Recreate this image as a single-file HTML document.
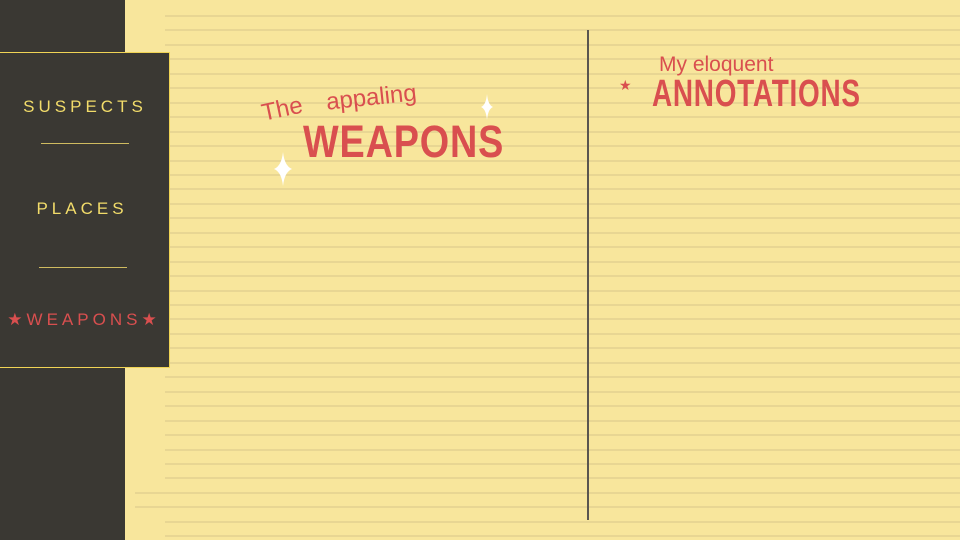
<!DOCTYPE html>
<html><head><style>
body{margin:0;width:960px;height:540px;overflow:hidden;background:#f8e69c;position:relative;font-family:"Liberation Sans",sans-serif}
.dark{position:absolute;left:0;top:0;width:125px;height:540px;background:#3a3833}
.line{position:absolute;left:165px;right:0;height:2px;background:#e8d693}
.panel{position:absolute;left:0;top:52px;width:169px;height:314px;background:#3a3833;border:1px solid #f0d455;border-left:none}
.nav{position:absolute;width:170px;text-align:center;font-size:17px;letter-spacing:4px;color:#f2dc6a}
.sep{position:absolute;height:1px;background:#cfbb60}
.vline{position:absolute;left:587px;top:30px;width:2px;height:490px;background:#5a5650}
.red{color:#d94f4f;position:absolute;font-weight:bold;font-family:"Liberation Sans Narrow","Liberation Sans",sans-serif}
.hand{color:#d94f4f;position:absolute;font-family:"Liberation Sans",sans-serif}
</style></head><body>
<div class="dark"></div>
<div id="lines"></div>
<script>
var h='';for(var i=0;i<37;i++){var y=Math.round(15+i*14.45);var l=(y>485&&y<510)?135:165;h+='<div class="line" style="top:'+y+'px;left:'+l+'px"></div>';}
document.getElementById('lines').innerHTML=h;
</script>
<div class="panel"></div>
<div class="nav" style="top:97px">SUSPECTS</div>
<div class="sep" style="left:41px;top:143px;width:88px"></div>
<div class="nav" style="top:199px;left:-3px">PLACES</div>
<div class="sep" style="left:39px;top:267px;width:88px"></div>
<div class="nav" style="top:310px;color:#d94f4f;left:-1px">★WEAPONS★</div>
<div class="vline"></div>
<div class="hand" style="left:262px;top:100px;font-size:24px;transform:rotate(-12deg);transform-origin:left">The</div>
<div class="hand" style="left:326px;top:84px;font-size:24px;transform:rotate(-6deg)">appaling</div>
<div class="red" style="left:303px;top:116px;font-size:45px;letter-spacing:1px;transform:scaleX(0.84);transform-origin:left">WEAPONS</div>
<svg style="position:absolute;left:274px;top:152px" width="18" height="34" viewBox="0 0 18 34"><path d="M9 0 Q10.5 14 18 17 Q10.5 20 9 34 Q7.5 20 0 17 Q7.5 14 9 0Z" fill="#fff"/></svg>
<svg style="position:absolute;left:481px;top:94px" width="12" height="26" viewBox="0 0 12 26"><path d="M6 0 Q7 11 12 13 Q7 15 6 26 Q5 15 0 13 Q5 11 6 0Z" fill="#fff"/></svg>
<div class="hand" style="left:659px;top:53px;font-size:21px">My eloquent</div>
<div class="red" style="left:652px;top:73px;font-size:38px;letter-spacing:1px;transform:scaleX(0.735);transform-origin:left">ANNOTATIONS</div>
<div style="position:absolute;left:619px;top:77px;color:#d94f4f;font-size:14px">★</div>
</body></html>
